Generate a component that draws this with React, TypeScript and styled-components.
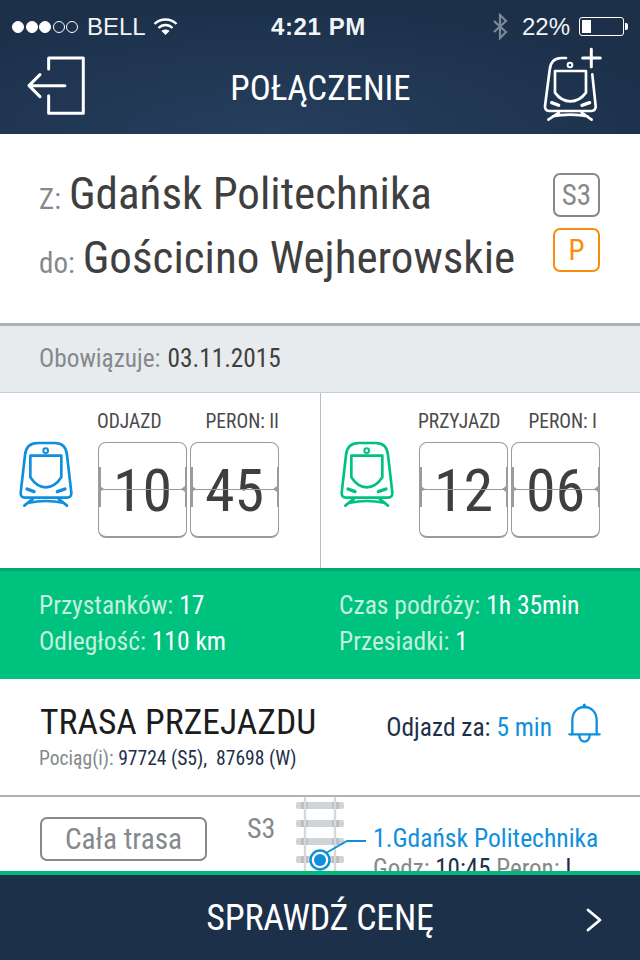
import React from "react";
import styled, { createGlobalStyle } from "styled-components";

const Global = createGlobalStyle`
  html, body { margin: 0; padding: 0; width: 640px; height: 960px; overflow: hidden; background: #fff; }
  * { box-sizing: border-box; }
  body { font-family: Roboto, "Liberation Sans", sans-serif; font-stretch: 75%; }
`;

const Screen = styled.div`
  width: 640px; height: 960px; display: flex; flex-direction: column; overflow: hidden; background: #fff;
`;
const Header = styled.header`
  height: 134px; flex: none; display: flex; flex-direction: column; color: #fff;
  background: radial-gradient(ellipse 420px 130px at 270px 134px, #263f5e 0%, #1c304a 100%);
`;
const StatusBar = styled.div`
  height: 44px; padding: 9px 13px 0 12px; display: grid; grid-template-columns: 1fr auto 1fr; align-items: center;
  font-family: "Liberation Sans", Arial, sans-serif; font-stretch: 100%; font-size: 24px; line-height: 30px; color: #f2f4f6;
`;
const StatusLeft = styled.div` display: flex; align-items: center; gap: 9px; `;
const WifiIcon = styled.svg` margin-left: -2px; `;
const Dots = styled.div` display: flex; gap: 1.5px; `;
const Dot = styled.span<{ $on?: boolean }>`
  width: 12px; height: 12px; border-radius: 50%; border: 1px solid #fff; background: ${p => (p.$on ? "#fff" : "transparent")};
`;
const Time = styled.div` font-weight: 700; letter-spacing: .6px; margin-left: -2px; `;
const StatusRight = styled.div` display: flex; align-items: center; justify-content: flex-end; gap: 14px; `;
const Battery = styled.div`
  position: relative; width: 45px; height: 19px; border: 1px solid #fff; border-radius: 3px; padding: 2px; margin-right: 3px; margin-left: -5px;
  &::after { content: ""; position: absolute; right: -5px; top: 5px; width: 3px; height: 7px; background: #fff; border-radius: 0 2px 2px 0; }
`;
const BatteryFill = styled.div` width: 9px; height: 100%; background: #fff; `;
const NavBar = styled.div`
  flex: 1; display: flex; align-items: center; justify-content: space-between; padding: 0 36px 0 25px;
`;
const NavIcon = styled.svg` flex: none; margin-bottom: 7px; `;
const NavTitle = styled.h1`
  margin: 0; font-size: 35px; line-height: 44px; font-weight: 400; color: #fff; padding: 0 0 0 12px;
`;
const Route = styled.section`
  height: 192px; flex: none; background: #fff; border-bottom: 3px solid #aeb2b5; padding: 29px 40px 0 39px; display: flex; justify-content: space-between;
`;
const RouteLines = styled.div` display: flex; flex-direction: column; gap: 3px; `;
const RouteLine = styled.div` display: flex; align-items: baseline; gap: 8px; height: 61px; `;
const RouteLabel = styled.span` font-size: 29px; color: #85898b; `;
const RouteStation = styled.span` font-size: 45.1px; color: #3f3f3f; line-height: 61px; `;
const Badges = styled.div` display: flex; flex-direction: column; gap: 11px; padding-top: 10px; `;
const Badge = styled.div<{ $color: string }>`
  width: 47px; height: 44px; border: 2px solid ${p => p.$color}; border-radius: 7px; color: ${p => p.$color};
  display: flex; align-items: center; justify-content: center; font-size: 29px;
`;
const Validity = styled.div`
  height: 67px; flex: none; background: #e8ebee; border-bottom: 1px solid #c9cdd1; padding: 0 39px 2px; display: flex; align-items: center; gap: 7px; font-size: 25.3px; color: #85898b;
`;
const ValidityDate = styled.span` color: #3f3f3f; `;
const Times = styled.section` height: 175px; flex: none; display: grid; grid-template-columns: 320px 320px; `;
const TimeCell = styled.div<{ $divider?: boolean }>`
  display: flex; padding: 0 41px 0 18px; gap: 23px;
  ${p => p.$divider && "border-left: 1px solid #b9bcbf; padding-right: 40px;"}
`;
const TrainSlot = styled.div` width: 57px; flex: none; padding-top: 47px; `;
const TimeBlock = styled.div` flex: 1; display: flex; flex-direction: column; min-width: 0; `;
const TimeLabels = styled.div<{ $inset: number }>`
  height: 49px; display: flex; justify-content: space-between; align-items: flex-end; padding: 0 ${p => p.$inset}px 9px 0; margin-left: -1px; font-size: 19.5px; color: #4a4a4a;
`;
const Flaps = styled.div` display: flex; gap: 3px; `;
const Flap = styled.div`
  position: relative; width: 89px; height: 96px; padding-top: 2px; border: 1.5px solid #9a9c9c; border-bottom-width: 2px; border-radius: 8px; background: #fff; display: flex; align-items: center; justify-content: center;
  font-size: 60px; color: #3f3f3f;
  &::before { content: ""; position: absolute; left: 0; right: 0; top: 46px; height: 1px; background: #999; }
`;
const Hinge = styled.span<{ $side: "left" | "right" }>`
  position: absolute; top: 24px; ${p => p.$side}: -1px; width: 2.5px; height: 40px; background: #9a9c9c;
  &::after { content: ""; position: absolute; top: 19px; ${p => p.$side}: 2px; width: 0; height: 0; border-top: 3px solid transparent; border-bottom: 3px solid transparent; border-${p => p.$side}: 4px solid #9a9c9c; }
`;
const Stats = styled.section`
  height: 111px; flex: none; background: #00c27f; border-top: 3px solid #00a870; padding: 16px 40px 0 39px; display: grid; grid-template-columns: 300px 1fr; grid-auto-rows: 36px; font-size: 25.5px; color: #c3f0de;
`;
const StatItem = styled.div` white-space: nowrap; line-height: 36px; `;
const StatValue = styled.span` color: #fff; `;
const TripHead = styled.section`
  height: 118px; flex: none; display: flex; justify-content: space-between; padding: 22px 38px 0 40px; border-bottom: 2px solid #aeb2b5;
`;
const TripTitle = styled.h2` margin: 0; font-size: 35.6px; line-height: 42px; font-weight: 400; color: #1c1c1c; `;
const TripSub = styled.div` font-size: 19.6px; color: #85898b; margin-top: 4px; margin-left: -1px; `;
const TripTrains = styled.span` color: #1c304a; `;
const Countdown = styled.div` display: flex; align-items: flex-start; gap: 15px; font-size: 25.4px; line-height: 52px; color: #1c304a; `;
const BellIcon = styled.svg` margin-top: 2px; flex: none; `;
const Blue = styled.span` color: #0f8fdc; `;
const Stops = styled.section` height: 74px; flex: none; overflow: hidden; display: flex; padding: 0 0 0 40px; `;
const AllButton = styled.div`
  width: 167px; height: 44px; margin-top: 20px; border: 2px solid #85898b; border-radius: 7px; color: #85898b; font-size: 29.3px; display: flex; align-items: center; justify-content: center; flex: none;
`;
const Line = styled.div` width: 40px; margin-left: 40px; padding-top: 15px; font-size: 28px; color: #85898b; flex: none; `;
const Track = styled.div` width: 48px; margin-left: 9px; flex: none; `;
const TrackSvg = styled.svg` display: block; overflow: visible; `;
const Stop = styled.div` margin-left: 29px; padding-top: 25px; `;
const StopName = styled.div` font-size: 25.6px; line-height: 32px; color: #0f8fdc; white-space: nowrap; `;
const StopMeta = styled.div` font-size: 25px; line-height: 30px; color: #85898b; white-space: nowrap; `;
const StopStrong = styled.span` color: #1c304a; `;
const Footer = styled.footer`
  height: 89px; flex: none; background: #1c304a; border-top: 4px solid #00b87a; display: flex; align-items: center; justify-content: center; position: relative; color: #fff; font-size: 36px; letter-spacing: -.25px;
`;
const FooterArrow = styled.svg` position: absolute; right: 38px; top: 33px; `;

const TrainIcon = ({ color }: { color: string }) => (
  <svg width="56.7" height="68.3" viewBox="55 150 170 205" fill="none" stroke={color} strokeWidth="8" strokeLinecap="round" strokeLinejoin="round">
    <path d="M165 159 L115 159 C92 159 78 172 76 195 L63 308 C62 318 67 323 76 323 L202 323 C211 323 216 318 215 308 L202 195 C200 172 188 159 165 159 Z" />
    <circle cx="138" cy="182" r="7" strokeWidth="6" />
    <path d="M92 197 L185 197 L185 262 C172 282 155 292 138 292 C122 292 105 282 92 262 Z" />
    <path d="M82 297 L103 305 M196 297 L173 305" strokeWidth="10" />
    <path d="M100 326 L74 347 M176 326 L202 347 M88 338 C118 332 158 332 190 338" />
  </svg>
);

const TimeColumn = ({ iconColor, label, peron, h, m, divider, inset }: { iconColor: string; label: string; peron: string; h: string; m: string; divider?: boolean; inset: number }) => (
  <TimeCell $divider={divider}>
    <TrainSlot><TrainIcon color={iconColor} /></TrainSlot>
    <TimeBlock>
      <TimeLabels $inset={inset}><span>{label}</span><span>{peron}</span></TimeLabels>
      <Flaps>
        {[h, m].map((v, i) => (
          <Flap key={i}>{v}<Hinge $side="left" /><Hinge $side="right" /></Flap>
        ))}
      </Flaps>
    </TimeBlock>
  </TimeCell>
);

export default function App() {
  return (
    <Screen>
      <Global />
      <Header>
        <StatusBar>
          <StatusLeft>
            <Dots><Dot $on /><Dot $on /><Dot $on /><Dot /><Dot /></Dots>
            <span>BELL</span>
            <WifiIcon width="25" height="19" viewBox="0 0 25 19" fill="none" stroke="#fff" strokeWidth="2.4">
              <path d="M1.5 7 C7.5 1 17.5 1 23.5 7" />
              <path d="M5.5 11 C9.5 7 15.5 7 19.5 11" />
              <path d="M12.5 18 L8.5 14 C10.5 12 14.5 12 16.5 14 Z" fill="#fff" stroke="none" />
            </WifiIcon>
          </StatusLeft>
          <Time>4:21 PM</Time>
          <StatusRight>
            <svg width="15" height="27" viewBox="0 0 15 27" fill="none" stroke="#7b8899" strokeWidth="2.2">
              <path d="M1 8 L13 19 L7 25 L7 2 L13 8 L1 19" />
            </svg>
            <span>22%</span>
            <Battery><BatteryFill /></Battery>
          </StatusRight>
        </StatusBar>
        <NavBar>
          <NavIcon width="63.3" height="63.3" viewBox="75 160 190 190" fill="none" stroke="#fff" strokeWidth="9" strokeLinecap="round" strokeLinejoin="round">
            <path d="M146 205 L146 172 L250 172 L250 338 L146 338 L146 285" />
            <path d="M87 255 L195 255 M120 222 L87 255 L120 288" />
          </NavIcon>
          <NavTitle>POŁĄCZENIE</NavTitle>
          <NavIcon width="63.3" height="78.3" viewBox="660 140 190 235" fill="none" stroke="#fff" strokeWidth="8" strokeLinecap="round" strokeLinejoin="round">
            <path d="M735 176 L722 176 C700 176 688 190 686 212 L672 320 C671 330 676 335 684 335 L812 335 C820 335 825 330 824 320 L814 225" />
            <circle cx="747" cy="197" r="7" strokeWidth="6" />
            <path d="M702 215 L795 215 L795 280 C782 298 765 306 748 306 C732 306 715 298 702 280 Z" />
            <path d="M692 310 L713 318 M806 310 L783 318" strokeWidth="10" />
            <path d="M714 340 L682 361 M782 340 L812 361 M696 351 C725 344 770 344 800 351" />
            <path d="M811 150 L811 203 M785 176 L838 176" strokeWidth="9" />
          </NavIcon>
        </NavBar>
      </Header>

      <Route>
        <RouteLines>
          <RouteLine><RouteLabel>Z:</RouteLabel><RouteStation>Gdańsk Politechnika</RouteStation></RouteLine>
          <RouteLine><RouteLabel>do:</RouteLabel><RouteStation>Gościcino Wejherowskie</RouteStation></RouteLine>
        </RouteLines>
        <Badges>
          <Badge $color="#85898b">S3</Badge>
          <Badge $color="#f98c0c">P</Badge>
        </Badges>
      </Route>

      <Validity>Obowiązuje: <ValidityDate>03.11.2015</ValidityDate></Validity>

      <Times>
        <TimeColumn iconColor="#0f8fdc" label="ODJAZD" peron="PERON: II" h="10" m="45" inset={0} />
        <TimeColumn iconColor="#00c27f" label="PRZYJAZD" peron="PERON: I" h="12" m="06" divider inset={3} />
      </Times>

      <Stats>
        <StatItem>Przystanków: <StatValue>17</StatValue></StatItem>
        <StatItem>Czas podróży: <StatValue>1h 35min</StatValue></StatItem>
        <StatItem>Odległość: <StatValue>110 km</StatValue></StatItem>
        <StatItem>Przesiadki: <StatValue>1</StatValue></StatItem>
      </Stats>

      <TripHead>
        <div>
          <TripTitle>TRASA PRZEJAZDU</TripTitle>
          <TripSub>Pociąg(i): <TripTrains>97724 (S5),&nbsp; 87698 (W)</TripTrains></TripSub>
        </div>
        <Countdown>
          <span>Odjazd za: <Blue>5 min</Blue></span>
          <BellIcon width="35" height="40.7" viewBox="140 38 105 122" fill="none" stroke="#0f8fdc" strokeWidth="7" strokeLinecap="round" strokeLinejoin="round">
            <path d="M156 132 L156 90 C156 65 172 50 192 50 C212 50 229 65 229 90 L229 132" />
            <path d="M147 132 L238 132" />
            <path d="M192 44 L192 50" strokeWidth="9" />
            <path d="M177 135 C177 160 208 160 208 135" />
          </BellIcon>
        </Countdown>
      </TripHead>

      <Stops>
        <AllButton>Cała trasa</AllButton>
        <Line>S3</Line>
        <Track>
          <TrackSvg width="48" height="74" viewBox="0 0 48 74" fill="none">
            <g fill="#d0d4d7">
              <rect x="0" y="5" width="48" height="7" rx="2" />
              <rect x="0" y="23" width="48" height="7" rx="2" />
              <rect x="0" y="41" width="48" height="7" rx="2" />
              <rect x="0" y="59" width="48" height="7" rx="2" />
            </g>
            <g fill="#b8bec2">
              <rect x="5" y="5" width="7" height="7" />
              <rect x="36" y="5" width="7" height="7" />
              <rect x="5" y="23" width="7" height="7" />
              <rect x="36" y="23" width="7" height="7" />
              <rect x="5" y="41" width="7" height="7" />
              <rect x="36" y="41" width="7" height="7" />
              <rect x="5" y="59" width="7" height="7" />
              <rect x="36" y="59" width="7" height="7" />
            </g>
            <path d="M9 0 V74 M39 0 V74" stroke="#d5d9dc" strokeWidth="2.4" />
            <circle cx="24" cy="63" r="9.5" fill="#fff" stroke="#0f8fdc" strokeWidth="2.4" />
            <circle cx="24" cy="63" r="6" fill="#0f8fdc" />
            <path d="M30 56 L51 44 L70 44" stroke="#0f8fdc" strokeWidth="2" />
          </TrackSvg>
        </Track>
        <Stop>
          <StopName>1.Gdańsk Politechnika</StopName>
          <StopMeta>Godz: <StopStrong>10:45</StopStrong> Peron: <StopStrong>I</StopStrong></StopMeta>
        </Stop>
      </Stops>

      <Footer>
        SPRAWDŹ CENĘ
        <FooterArrow width="16" height="24" viewBox="0 0 16 24" fill="none" stroke="#fff" strokeWidth="2.8" strokeLinecap="round" strokeLinejoin="round">
          <path d="M2 2 L14 12 L2 22" />
        </FooterArrow>
      </Footer>
    </Screen>
  );
}
